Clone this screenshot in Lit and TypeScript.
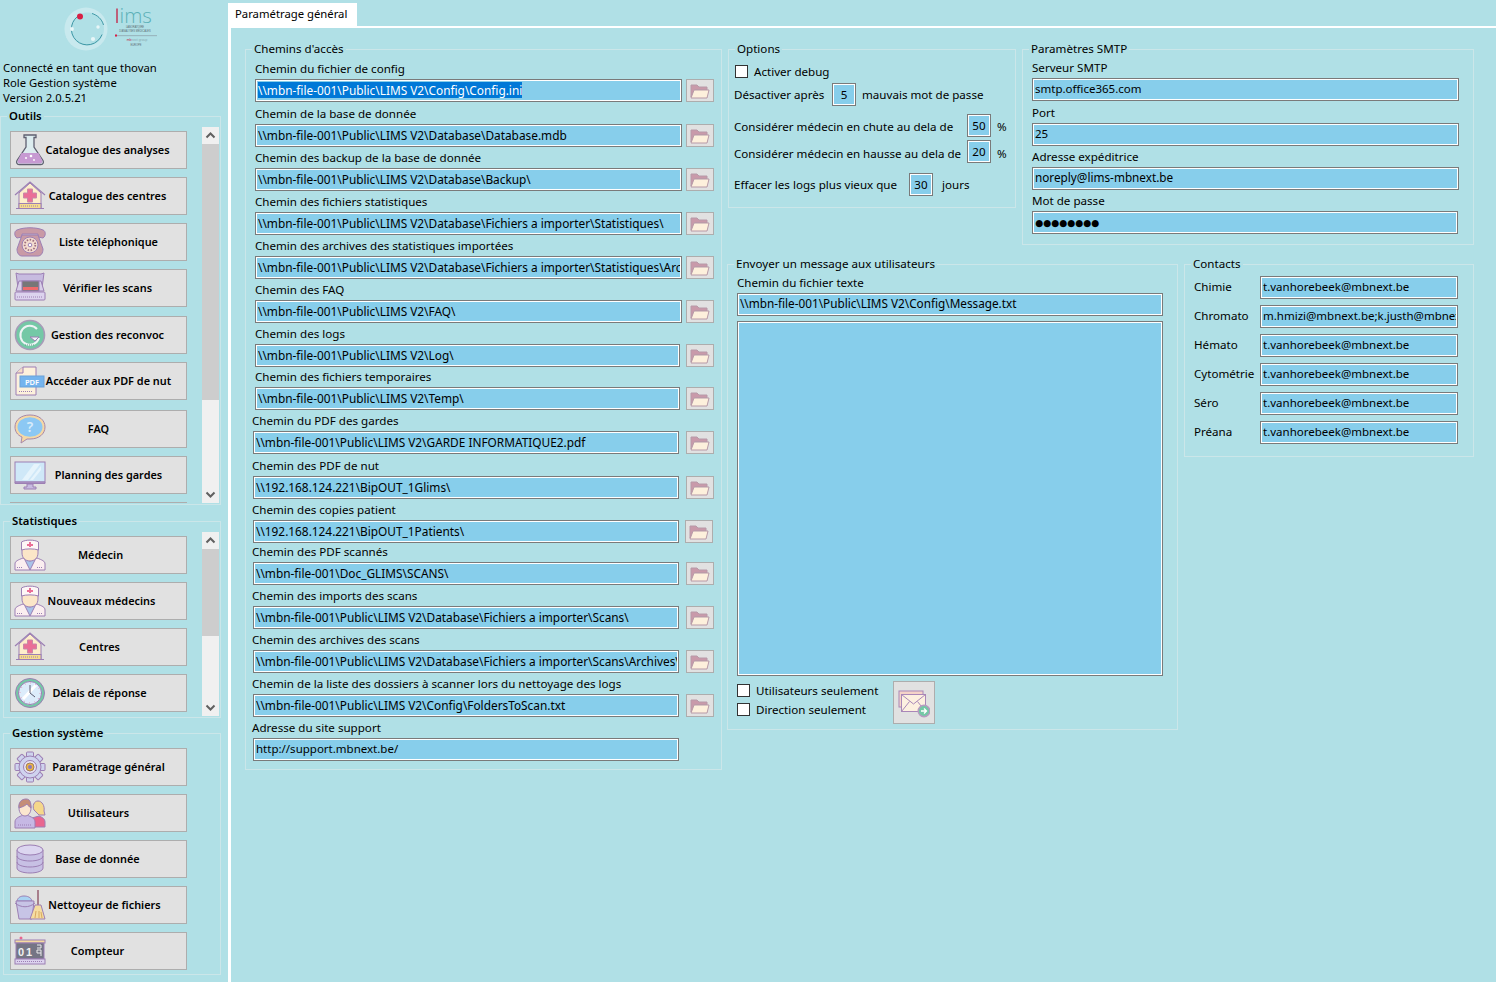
import { LitElement, html, svg, css } from 'lit';
import { customElement } from 'lit/decorators.js';

const icon = (body: unknown) => html`<svg class="ico" viewBox="0 0 32 32" fill="none" stroke="#9c7fb4" stroke-width="1">${body}</svg>`;

const home = svg`
  <path d="M5 13 16 3l11 10v15H5z" fill="#fdeecb"/>
  <path d="M1 15 16 2l15 13" stroke-width="1.200"/>
  <path d="M13.500 9h5v4h4v5h-4v4h-5v-4h-4v-5h4z" fill="#ea6f97" stroke="#c88aa8"/>
  <rect x="5" y="23.500" width="22" height="5" fill="#f6dc8c"/>
  <path d="M7 26h18" stroke-dasharray="1 1"/>
  <path d="M2 28.500h28"/>`;

const doctor = svg`
  <path d="M1 31v-6c0-3 3-4 8-6l7 2 7-2c5 2 8 3 8 6v6z" fill="#fbeef0"/>
  <path d="M10 19l6 12 6-12-6 3z" fill="#a9c3e8"/>
  <path d="M8 9v5c0 5 3.500 8 8 8s8-3 8-8V9z" fill="#fbe6c8"/>
  <path d="M7.500 11V3c4-2.500 13-2.500 17 0v8c-4-1.500-13-1.500-17 0z" fill="#fdf6f6"/>
  <path d="M15 3h2v2h2v2h-2v1h-2V7h-2V5h2z" fill="#ea6f97" stroke="none"/>
  <path d="M3 28.500h6M23 28.500h6" stroke-dasharray="1 1"/>`;

const gearTeeth = [0, 45, 90, 135, 180, 225, 270, 315];

const icons: Record<string, unknown> = {
  flask: icon(svg`
    <path d="M10 1h12v2.500h-2V13l9 13.500c1 2 0 4-2 4H5c-2 0-3-2-2-4L12 13V3.500h-2z" fill="#dcecef" stroke="#5f5f70" stroke-width="1.300"/>
    <path d="M7.500 19h17l3.500 7c1 2 0 3.500-2 3.500H6c-2 0-3-1.500-2-3.500z" fill="#c79ad2" stroke="none"/>
    <circle cx="12" cy="24" r="1" fill="#fff" stroke="none"/><circle cx="17" cy="22" r="1.300" fill="#fff" stroke="none"/><circle cx="20" cy="26" r=".9" fill="#fff" stroke="none"/>`),
  home: icon(home),
  phone: icon(svg`
    <path d="M3 12c-3-2-3-7 0-8 7-3 19-3 26 0 3 1 3 6 0 8l-5-1V8H8v3z" fill="#c99aa6"/>
    <path d="M8 9h16l5 14c0 4-2 7-5 7H8c-3 0-5-3-5-7z" fill="#c99aa6"/>
    <circle cx="16" cy="19" r="8" fill="#f4dcd0"/>
    <circle cx="16" cy="19" r="5.300" stroke-dasharray="1.500 1.500" stroke="#a0707f" stroke-width="1.800"/>
    <circle cx="16" cy="19" r="1.800" fill="#fff"/>`),
  scanner: icon(svg`
    <path d="M2 1l3 1h22l3-1-2 15H4z" fill="#c7bbe0"/>
    <path d="M5 9h22l3 10H2z" fill="#d8cfe8"/>
    <rect x="8" y="9" width="17" height="10" fill="#777"/>
    <rect x="9" y="15" width="15" height="3" fill="#ee6b6b" stroke="none"/>
    <rect x="1" y="20" width="30" height="8" rx="1" fill="#dcd3ee"/>
    <path d="M3 25h26" stroke-dasharray="1 1"/>`),
  reconvoc: icon(svg`
    <circle cx="16" cy="16" r="14.500" fill="#74c8a6" stroke="#a79bb8" stroke-width="1.600"/>
    <path d="M23 10a9.500 9.500 0 1 0 2 9" stroke="#eef3f5" stroke-width="2"/>
    <path d="M16 18h9l-4 4z" fill="#eef3f5" stroke="#9c7fb4"/>
    <path d="M11 26h10" stroke-dasharray="1 1" stroke="#5d9c84"/>`),
  pdf: icon(svg`
    <path d="M2 8l7-6h13v28H2z" fill="#fdf1dc"/>
    <path d="M2 8h7V2" fill="#f4ddc8"/>
    <path d="M5 26.500h14" stroke-dasharray="1 1"/>
    <rect x="6" y="11" width="24" height="11" fill="#74b4ee" stroke="#6aa2d8"/>
    <text x="18" y="20" text-anchor="middle" font-family="'Noto Sans',sans-serif" font-size="7.500" fill="#fff" stroke="none">PDF</text>`),
  faq: icon(svg`
    <path d="M16 2c9 0 15 5 15 12s-6 12-15 12h-3l-6 4 1-6C3 22 1 18 1 14 1 7 7 2 16 2z" fill="#f6d8a4" stroke="#a888a8"/>
    <ellipse cx="16" cy="14" rx="12.500" ry="9.800" fill="#8cc8f4" stroke="none"/>
    <text x="16" y="19" text-anchor="middle" font-family="'Noto Sans',sans-serif" font-size="14" fill="#d9ecfb" stroke="none">?</text>`),
  monitor: icon(svg`
    <rect x="1" y="3" width="30" height="20" fill="#cfe8f8"/>
    <path d="M8 21 20 5h6L14 21zM16 21 27 7v4l-8 10z" fill="#e6f4fc" stroke="none"/>
    <path d="M1 23h30v1.500H1z" fill="#b39ac8"/>
    <path d="M13 25h6v3h3v2H10v-2h3z" fill="#c7bbe0"/>`),
  doctor: icon(doctor),
  clock: icon(svg`
    <circle cx="16" cy="16" r="14.500" fill="#74c8a6" stroke="#9c7fb4"/>
    <circle cx="16" cy="16" r="11.500" fill="#dcecfb" stroke="#9c7fb4"/>
    <path d="M9 22 22 8" stroke="#fff" stroke-width="3"/>
    <path d="M16 8v8l5 4" stroke="#5c5c70" stroke-width="1"/>
    <circle cx="16" cy="16" r="10" stroke="#e887a2" stroke-dasharray=".8 4.400"/>`),
  gear: icon(svg`
    ${gearTeeth.map((a) => svg`<rect x="12.500" y="1" width="7" height="7" rx="1" fill="#cfd3ee" transform="rotate(${a} 16 16)"/>`)}
    <circle cx="16" cy="16" r="11" fill="#cfd3ee"/>
    <circle cx="16" cy="16" r="6.500" fill="#e8e4f2"/>
    <circle cx="16" cy="16" r="4" fill="#f0b840" stroke="#a08060"/>
    <circle cx="16" cy="16" r="1.700" fill="#8c7fa8"/>`),
  users: icon(svg`
    <path d="M20 13c-2-4 0-9 4-9s7 5 6 10l1 4h-6z" fill="#f5d78a"/>
    <path d="M18 21l7-2c3 1 6 3 6 6v5H18z" fill="#e8668f"/>
    <path d="M1 31v-6c0-4 4-5 8-7h4c4 2 8 3 8 7v6z" fill="#c6b8e4"/>
    <path d="M5 11c0-5 3-8 6-8s6 3 6 8-3 8-6 8-6-3-6-8z" fill="#fbe6cf"/>
    <path d="M5 11c-1-6 3-9 7-9s5 3 5 9c-2-1-3-3-4-4-2 2-5 3-8 4z" fill="#c58e78"/>
    <path d="M4 28h14" stroke-dasharray="1 1"/>`),
  database: icon(svg`
    <path d="M3 7v18c0 3 6 5 13 5s13-2 13-5V7z" fill="#c7c0e4"/>
    <ellipse cx="16" cy="7" rx="13" ry="5" fill="#dcd6f0"/>
    <path d="M3 13c0 3 6 5 13 5s13-2 13-5M3 19c0 3 6 5 13 5s13-2 13-5"/>`),
  cleaner: icon(svg`
    <path d="M3 12c1-4 4-5 7-5s7 1 8 5z" fill="#a9d3f2"/>
    <path d="M2 12h18l-2 18H5z" fill="#c7c4e6"/>
    <path d="M1 14c6 5 14 5 20 0"/>
    <path d="M24 1v16" stroke="#a87f8c" stroke-width="2"/>
    <path d="M21 16h6l4 14H16z" fill="#f5dca0"/>
    <path d="M21 29l1-7M25 29l0-7M28 29l-1-6" stroke="#d8a860"/>`),
  counter: icon(svg`
    <circle cx="7" cy="3" r="1.500" fill="#e8668f" stroke="none"/>
    <rect x="1" y="5" width="30" height="3" fill="#f5dca0"/>
    <rect x="2" y="8" width="28" height="16" fill="#757585"/>
    <text x="4" y="20.500" font-family="'Liberation Sans',sans-serif" font-size="11" letter-spacing="2" fill="#f0f0f0" stroke="none">01</text>
    <path d="M23 10h4v3h-4M23 18v-3h4v6M23 18h4" stroke="#ececec"/>
    <rect x="1" y="24" width="30" height="5" fill="#dcd3ee"/>
    <path d="M3 26.500h26" stroke-dasharray="1 1"/>`),
};

const folderIcon = html`<svg class="folder" viewBox="0 0 20 16" fill="none" stroke="#b79aa8">
  <path d="M1 14V2h6l2 2h8v3H5z" fill="#c99aaa"/>
  <path d="M1 15 4 7h15l-2 8z" fill="#fdf0dc"/>
</svg>`;

const mailIcon = html`<svg class="mail" viewBox="0 0 32 30" fill="none" stroke="#a987b8">
  <rect x="1" y="3" width="24" height="16" fill="#f5d3c8"/>
  <rect x="3.500" y="6.500" width="24" height="17" fill="#fdf0e0"/>
  <path d="M3.500 6.500 15.500 16l12-9.500M3.500 23.500l8-10M27.500 23.500l-8-10"/>
  <circle cx="26" cy="23" r="5.800" fill="#74c8a6" stroke="#b79ac0" stroke-width="1.400"/>
  <path d="M23 23h5M26 20.500l2.500 2.500-2.500 2.500" stroke="#fff" stroke-width="1.300"/>
</svg>`;

const logo = html`<svg class="logo" viewBox="0 0 100 46" fill="none">
  <circle cx="22" cy="22" r="21.500" fill="#c8e9ee"/>
  <circle cx="23.500" cy="22" r="16.500" fill="#b0e0e6"/>
  <path d="M17 7.500a15.800 15.800 0 1 0 21 20M39.500 18C38 12 33 8 28 6.500" stroke="#3f98a6" stroke-width="1"/>
  <circle cx="16" cy="9.500" r="3" fill="#d81f45"/>
  <circle cx="8" cy="22" r="1.900" fill="#e8f6f8"/><circle cx="34" cy="20" r="1.700" fill="#e8f6f8"/><circle cx="29" cy="32" r="2.100" fill="#e8f6f8"/>
  <rect x="52.300" y="1.500" width="1.400" height="14.500" fill="#c42a4c"/>
  <text x="55.500" y="16" font-family="'Open Sans',sans-serif" font-weight="300" font-size="20.500" fill="#5cb0b8">ims</text>
  <g font-family="'Liberation Sans',sans-serif" font-size="2.600" fill="#5a6a70" text-anchor="middle">
    <text x="71" y="21">LABORATOIRE</text>
    <text x="71" y="25">D'ANALYSES MÉDICALES</text>
    <text x="73" y="34" font-size="3.400" fill="#8aa8b0"><tspan fill="#c42a4c">mb</tspan>next group</text>
    <text x="72" y="39">EUROPE</text>
  </g>
  <rect x="51" y="28" width="42" height="1.200" fill="#9ab8c0"/>
  <rect x="51" y="27.500" width="2" height="2" fill="#d81f45"/>
</svg>`;

const chevron = (up: boolean) => html`<svg class="arrow" viewBox="0 0 17 17" fill="none" stroke="#606060" stroke-width="2">
  <path d=${up ? 'M4.500 10.500 8.500 6.500l4 4' : 'M4.500 6.500l4 4 4-4'}/>
</svg>`;

type Tool = { label: string; icon: string; shift: number; gap?: number };

const outils: Tool[] = [
  { label: 'Catalogue des analyses', icon: 'flask', shift: 9 },
  { label: 'Catalogue des centres', icon: 'home', shift: 9 },
  { label: 'Liste téléphonique', icon: 'phone', shift: 10 },
  { label: 'Vérifier les scans', icon: 'scanner', shift: 9, gap: 9 },
  { label: 'Gestion des reconvoc', icon: 'reconvoc', shift: 9 },
  { label: 'Accéder aux PDF de nut', icon: 'pdf', shift: 10, gap: 10 },
  { label: 'FAQ', icon: 'faq', shift: 0 },
  { label: 'Planning des gardes', icon: 'monitor', shift: 10 },
  // only the top edge of this one shows above the fold of the list
  { label: '', icon: '', shift: 0 },
];

const statistiques: Tool[] = [
  { label: 'Médecin', icon: 'doctor', shift: 2 },
  { label: 'Nouveaux médecins', icon: 'doctor', shift: 3 },
  { label: 'Centres', icon: 'home', shift: 1 },
  { label: 'Délais de réponse', icon: 'clock', shift: 1 },
];

const gestion: Tool[] = [
  { label: 'Paramétrage général', icon: 'gear', shift: 10 },
  { label: 'Utilisateurs', icon: 'users', shift: 0 },
  { label: 'Base de donnée', icon: 'database', shift: -1 },
  { label: 'Nettoyeur de fichiers', icon: 'cleaner', shift: 6 },
  { label: 'Compteur', icon: 'counter', shift: -1 },
];

// x shifts and gaps vary row by row in the original form
type PathRow = { label: string; value: string; gap: number; lx?: number; fx?: number; w?: number; bx?: number; noBtn?: boolean; sel?: boolean };

const base = '\\\\mbn-file-001\\Public\\LIMS V2\\';

const paths: PathRow[] = [
  { label: 'Chemin du fichier de config', value: base + 'Config\\Config.ini', gap: 5, sel: true },
  { label: 'Chemin de la base de donnée', value: base + 'Database\\Database.mdb', gap: 5 },
  { label: 'Chemin des backup de la base de donnée', value: base + 'Database\\Backup\\', gap: 4 },
  { label: 'Chemin des fichiers statistiques', value: base + 'Database\\Fichiers a importer\\Statistiques\\', gap: 4 },
  { label: 'Chemin des archives des statistiques importées', value: base + 'Database\\Fichiers a importer\\Statistiques\\Archives\\', gap: 4 },
  { label: 'Chemin des FAQ', value: base + 'FAQ\\', gap: 4 },
  { label: 'Chemin des logs', value: base + 'Log\\', gap: 4, w: 425 },
  { label: 'Chemin des fichiers temporaires', value: base + 'Temp\\', gap: 3, w: 425 },
  { label: 'Chemin du PDF des gardes', value: base + 'GARDE INFORMATIQUE2.pdf', gap: 4, lx: 252, fx: 253, w: 426 },
  { label: 'Chemin des PDF de nut', value: '\\\\192.168.124.221\\BipOUT_1Glims\\', gap: 5, lx: 252, fx: 253, w: 426 },
  { label: 'Chemin des copies patient', value: '\\\\192.168.124.221\\BipOUT_1Patients\\', gap: 4, lx: 252, fx: 253, w: 426, bx: 685 },
  { label: 'Chemin des PDF scannés', value: '\\\\mbn-file-001\\Doc_GLIMS\\SCANS\\', gap: 2, lx: 252, fx: 253, w: 426, bx: 686 },
  { label: 'Chemin des imports des scans', value: base + 'Database\\Fichiers a importer\\Scans\\', gap: 4, lx: 252, fx: 253, w: 426, bx: 686 },
  { label: 'Chemin des archives des scans', value: base + 'Database\\Fichiers a importer\\Scans\\Archives\\', gap: 4, lx: 252, fx: 253, w: 426, bx: 686 },
  { label: 'Chemin de la liste des dossiers à scanner lors du nettoyage des logs', value: base + 'Config\\FoldersToScan.txt', gap: 4, lx: 252, fx: 253, w: 426, bx: 686 },
  { label: 'Adresse du site support', value: 'http://support.mbnext.be/', gap: 4, lx: 252, fx: 253, w: 426, noBtn: true },
];

const contacts = [
  ['Chimie', 't.vanhorebeek@mbnext.be'],
  ['Chromato', 'm.hmizi@mbnext.be;k.justh@mbnext.be'],
  ['Hémato', 't.vanhorebeek@mbnext.be'],
  ['Cytométrie', 't.vanhorebeek@mbnext.be'],
  ['Séro', 't.vanhorebeek@mbnext.be'],
  ['Préana', 't.vanhorebeek@mbnext.be'],
];

@customElement('app-root')
export class AppRoot extends LitElement {
  static styles = css`
    :host {
      display: flex;
      width: 1496px;
      height: 982px;
      overflow: hidden;
      background: #b0e0e6;
      color: #000;
      font-family: 'Noto Sans', 'Open Sans', sans-serif;
      font-size: 11.6px;
      line-height: 15px;
    }
    * {
      box-sizing: border-box;
    }
    fieldset {
      margin: 0;
      padding: 0;
      min-width: 0;
      border: 1px solid #cbe6e9;
    }
    legend {
      padding: 0 2px;
      height: 15px;
      line-height: 13px;
    }

    /* sidebar */
    .side {
      width: 228px;
      flex: none;
    }
    .logo {
      display: block;
      width: 100px;
      height: 46px;
      margin-left: 64px;
      overflow: visible;
    }
    .logo-wrap {
      height: 60px;
      padding-top: 7px;
    }
    .info {
      padding-left: 3px;
      height: 49px;
      font-size: 11.3px;
    }
    .side legend {
      font-weight: 600;
      font-size: 11.3px;
    }
    .outils {
      width: 221px;
      padding-left: 9px;
    }
    .outils legend {
      margin-left: -3px;
    }
    .outils .list {
      height: 376px;
    }
    .stats,
    .sys {
      width: 218px;
      margin: 9px 0 0 3px;
      padding-left: 6px;
    }
    .sys {
      margin-top: 8px;
    }
    .stats .list {
      height: 184px;
    }
    .scroller {
      display: flex;
      margin-top: 3px;
      margin-bottom: 1px;
    }
    .list {
      width: 192px;
      overflow: hidden;
      padding-top: 4px;
    }
    .bar {
      width: 17px;
      flex: none;
      background: #f0f0f0;
      display: flex;
      flex-direction: column;
    }
    .arrow {
      display: block;
      width: 17px;
      height: 17px;
      flex: none;
    }
    .thumb {
      background: #cdcdcd;
      flex: none;
    }
    .rest {
      flex: 1;
    }
    .sys-list {
      padding: 7px 0 4px;
    }
    .tool {
      display: grid;
      align-items: center;
      width: 177px;
      height: 38px;
      background: #e1e1e1;
      border: 1px solid #adadad;
      margin-bottom: 8px;
      font-weight: 600;
      font-size: 10.9px;
    }
    .sys-list .tool:last-child {
      margin-bottom: 0;
    }
    .tool > * {
      grid-area: 1 / 1;
    }
    .tool .label {
      justify-self: center;
      white-space: nowrap;
      margin-top: -2px;
    }
    .ico {
      display: block;
      width: 32px;
      height: 32px;
      margin-left: 3px;
    }

    /* main panel */
    .main {
      flex: 1;
      display: flex;
      flex-direction: column;
      padding-top: 3px;
    }
    .tab {
      width: 129px;
      height: 23px;
      background: #fff;
      padding: 3px 0 0 7px;
      font-size: 11.3px;
    }
    .panel {
      flex: 1;
      display: flex;
      border-left: 3px solid #fff;
      border-top: 2px solid #fff;
      padding: 14px 0 0 14px;
      align-items: flex-start;
    }
    .paths {
      width: 477px;
      flex: none;
      padding-bottom: 8px;
    }
    .paths legend {
      margin-left: 6px;
    }
    .path-row {
      display: flex;
      flex-direction: column;
    }
    .path-label {
      height: 15px;
      line-height: 13px;
    }
    .path-line {
      display: flex;
      margin-top: 2px;
    }
    .field {
      height: 23px;
      flex: none;
      background: #87ceeb;
      border: 1px solid #7a7a7a;
      outline: 1px solid #fff;
      outline-offset: -2px;
      padding: 2px 2px 0;
      white-space: nowrap;
      overflow: hidden;
      font-size: 11.5px;
    }
    .path-field {
      font-size: 11.85px;
      padding-top: 3px;
    }
    .web-field {
      font-size: 11.5px;
    }
    .mail-field {
      font-size: 11.75px;
    }
    .sel {
      background: #0078d7;
      color: #fff;
    }
    .browse {
      width: 28px;
      height: 23px;
      flex: none;
      background: #e1e1e1;
      border: 1px solid #adadad;
      display: flex;
      align-items: center;
      justify-content: center;
    }
    .folder {
      display: block;
      width: 20px;
      height: 16px;
    }
    .right {
      margin-left: 5px;
      flex: none;
      width: 747px;
    }
    .top-row {
      display: flex;
      align-items: flex-start;
      padding-left: 1px;
      gap: 6px;
    }
    .bottom-row {
      display: flex;
      align-items: flex-start;
      gap: 6px;
      margin-top: 12px;
    }

    /* options */
    .options {
      width: 288px;
      height: 166px;
      padding-left: 5px;
    }
    .options legend {
      margin-left: 1px;
    }
    .opt {
      display: flex;
      align-items: center;
      white-space: nowrap;
    }
    .opt-check {
      margin: 7px 0 0 1px;
      height: 15px;
    }
    .opt-block {
      margin-top: 4px;
    }
    .opt-chute {
      margin-top: 8px;
    }
    .opt-hausse {
      margin-top: 3px;
    }
    .opt-logs {
      margin-top: 10px;
    }
    .down1 {
      padding-top: 2px;
    }
    .down2 {
      padding-top: 4px;
    }
    .num {
      width: 24px;
      height: 23px;
      flex: none;
      text-align: center;
      padding: 3px 0 0;
      background: #87ceeb;
      border: 1px solid #7a7a7a;
      outline: 1px solid #fff;
      outline-offset: -2px;
    }
    .after {
      margin-left: 6px;
    }
    .w98 {
      width: 98px;
    }
    .w233 {
      width: 233px;
    }
    .w175 {
      width: 175px;
    }
    .check {
      width: 13px;
      height: 13px;
      flex: none;
      background: #fff;
      border: 1px solid #333;
      margin-right: 6px;
    }

    /* smtp */
    .smtp {
      width: 452px;
      padding: 0 0 10px 9px;
    }
    .smtp legend {
      margin-left: -3px;
    }
    .stack-label {
      height: 15px;
      line-height: 13px;
      margin-top: 4px;
      margin-bottom: 2px;
    }
    .stack-wide {
      margin-top: 5px;
    }
    .w427 {
      width: 427px;
    }
    .w426 {
      width: 426px;
    }
    .dots {
      font-family: 'DejaVu Sans', sans-serif;
      font-size: 9.200px;
      padding-top: 3px;
    }

    /* message */
    .message {
      width: 451px;
      padding: 0 0 5px 9px;
    }
    .message legend,
    .contacts legend {
      margin-left: -3px;
    }
    .memo {
      width: 426px;
      height: 355px;
      margin-top: 5px;
      background: #87ceeb;
      border: 1px solid #7a7a7a;
      outline: 1px solid #fff;
      outline-offset: -2px;
    }
    .msg-foot {
      display: flex;
      margin-top: 5px;
    }
    .msg-checks {
      width: 156px;
      padding-top: 3px;
      display: flex;
      flex-direction: column;
      gap: 6px;
    }
    .msg-check {
      display: flex;
      align-items: center;
      height: 13px;
      white-space: nowrap;
    }
    .send {
      width: 42px;
      height: 43px;
      background: #e1e1e1;
      border: 1px solid #adadad;
      display: flex;
      align-items: center;
      justify-content: center;
    }
    .mail {
      display: block;
      width: 32px;
      height: 30px;
    }

    /* contacts */
    .contacts {
      width: 290px;
      padding: 4px 0 12px 9px;
      display: flex;
      flex-direction: column;
      gap: 6px;
    }
    .contact {
      display: flex;
      align-items: center;
    }
    .contact-name {
      width: 66px;
      flex: none;
      padding-bottom: 2px;
    }
    .w198 {
      width: 198px;
    }
  `;

  private tool(t: Tool) {
    return html`<div class="tool" style=${t.gap ? `margin-bottom:${t.gap}px` : ''}>
      ${icons[t.icon]}
      <span class="label" style="padding-left:${Math.max(t.shift * 2, 0)}px;padding-right:${Math.max(-t.shift * 2, 0)}px">${t.label}</span>
    </div>`;
  }

  private scrollbar(thumb: number) {
    return html`<div class="bar">
      ${chevron(true)}
      <div class="thumb" style="height:${thumb}px"></div>
      <div class="rest"></div>
      ${chevron(false)}
    </div>`;
  }

  private pathRow(r: PathRow) {
    const lx = r.lx ?? 255;
    const fx = r.fx ?? 255;
    const w = r.w ?? 427;
    const bx = r.bx ?? 686;
    return html`<div class="path-row" style="margin-top:${r.gap}px">
      <div class="path-label" style="margin-left:${lx - 246}px">${r.label}</div>
      <div class="path-line" style="margin-left:${fx - 246}px">
        <div class="field ${r.noBtn ? 'web-field' : 'path-field'}" style="width:${w}px">${r.sel ? html`<span class="sel">${r.value}</span>` : r.value}</div>
        ${r.noBtn ? '' : html`<div class="browse" style="margin-left:${bx - fx - w}px">${folderIcon}</div>`}
      </div>
    </div>`;
  }

  render() {
    return html`
      <aside class="side">
        <div class="logo-wrap">${logo}</div>
        <div class="info">
          Connecté en tant que thovan<br />
          Role Gestion système<br />
          Version 2.0.5.21
        </div>
        <fieldset class="outils">
          <legend>Outils</legend>
          <div class="scroller">
            <div class="list">${outils.map((t) => this.tool(t))}</div>
            ${this.scrollbar(256)}
          </div>
        </fieldset>
        <fieldset class="stats">
          <legend>Statistiques</legend>
          <div class="scroller">
            <div class="list">${statistiques.map((t) => this.tool(t))}</div>
            ${this.scrollbar(87)}
          </div>
        </fieldset>
        <fieldset class="sys">
          <legend>Gestion système</legend>
          <div class="sys-list">${gestion.map((t) => this.tool(t))}</div>
        </fieldset>
      </aside>

      <main class="main">
        <div class="tab">Paramétrage général</div>
        <div class="panel">
          <fieldset class="paths">
            <legend>Chemins d'accès</legend>
            ${paths.map((r) => this.pathRow(r))}
          </fieldset>

          <div class="right">
            <div class="top-row">
              <fieldset class="options">
                <legend>Options</legend>
                <div class="opt opt-check"><span class="check"></span>Activer debug</div>
                <div class="opt opt-block"><span class="w98">Désactiver après</span><div class="num">5</div><span class="after">mauvais mot de passe</span></div>
                <div class="opt opt-chute"><span class="w233 down1">Considérer médecin en chute au dela de</span><div class="num">50</div><span class="after down1">%</span></div>
                <div class="opt opt-hausse"><span class="w233 down2">Considérer médecin en hausse au dela de</span><div class="num">20</div><span class="after down2">%</span></div>
                <div class="opt opt-logs"><span class="w175">Effacer les logs plus vieux que</span><div class="num">30</div><span class="after">&nbsp;jours</span></div>
              </fieldset>
              <fieldset class="smtp">
                <legend>Paramètres SMTP</legend>
                <div class="stack-label">Serveur SMTP</div>
                <div class="field w427">smtp.office365.com</div>
                <div class="stack-label stack-wide">Port</div>
                <div class="field w427">25</div>
                <div class="stack-label">Adresse expéditrice</div>
                <div class="field w427 mail-field">noreply@lims-mbnext.be</div>
                <div class="stack-label">Mot de passe</div>
                <div class="field w426 dots">●●●●●●●●</div>
              </fieldset>
            </div>
            <div class="bottom-row">
              <fieldset class="message">
                <legend>Envoyer un message aux utilisateurs</legend>
                <div class="stack-label">Chemin du fichier texte</div>
                <div class="field w426 mail-field">${base}Config\\Message.txt</div>
                <div class="memo"></div>
                <div class="msg-foot">
                  <div class="msg-checks">
                    <div class="msg-check"><span class="check"></span>Utilisateurs seulement</div>
                    <div class="msg-check"><span class="check"></span>Direction seulement</div>
                  </div>
                  <div class="send">${mailIcon}</div>
                </div>
              </fieldset>
              <fieldset class="contacts">
                <legend>Contacts</legend>
                ${contacts.map(
                  ([name, mail]) => html`<div class="contact">
                    <span class="contact-name">${name}</span>
                    <div class="field w198">${mail}</div>
                  </div>`,
                )}
              </fieldset>
            </div>
          </div>
        </div>
      </main>
    `;
  }
}
